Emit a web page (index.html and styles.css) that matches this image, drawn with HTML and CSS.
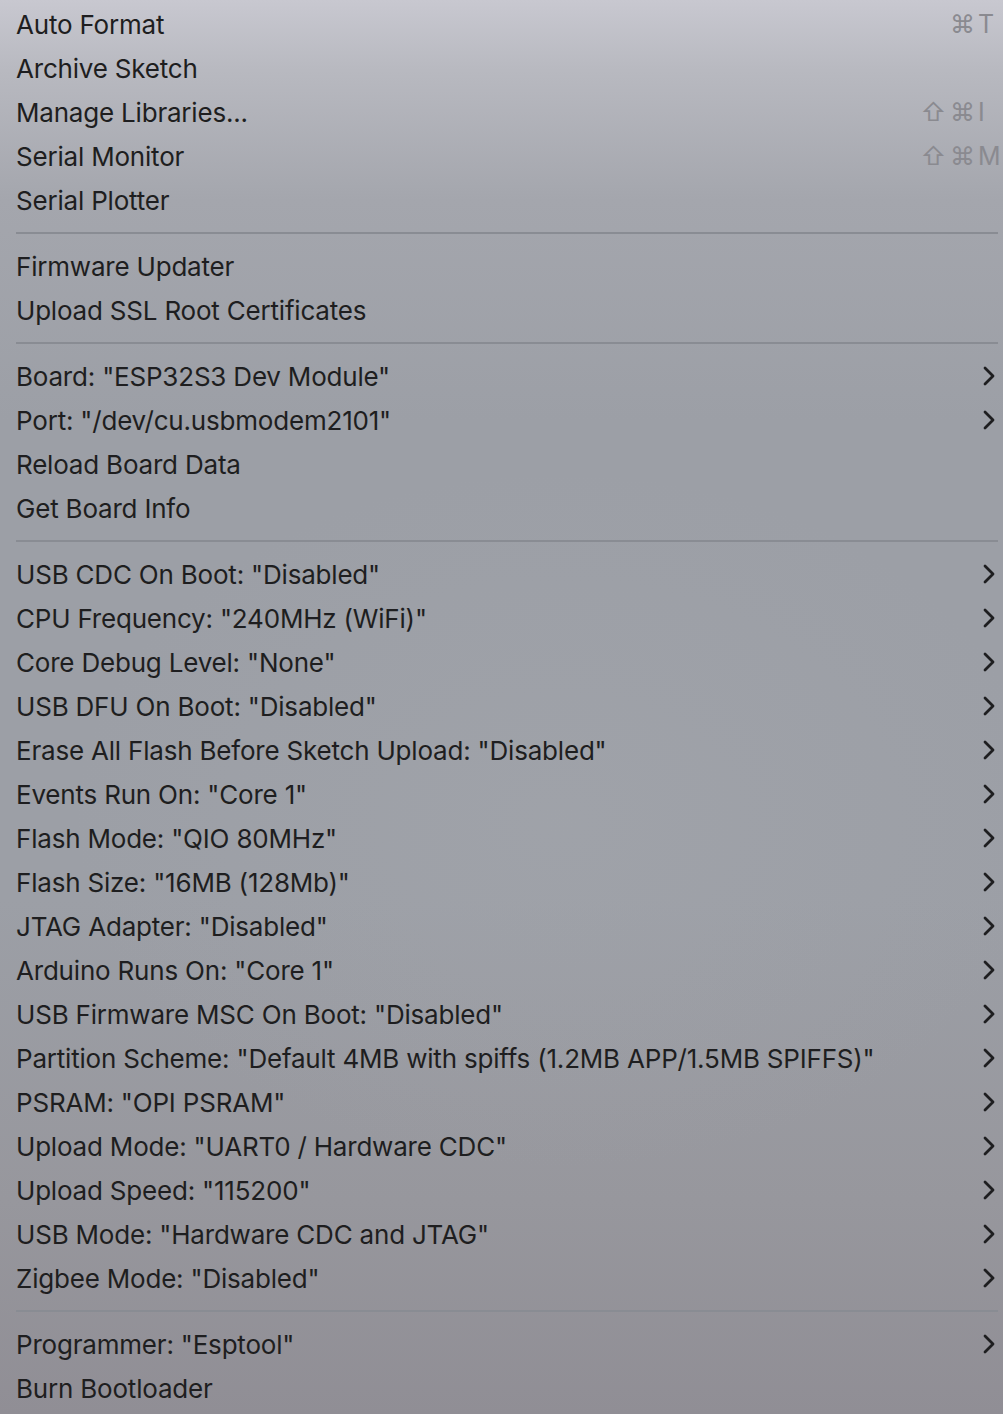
FILE: index.html
```html
<!DOCTYPE html>
<html lang="en">
<head>
<meta charset="utf-8">
<title>Tools menu</title>
<link rel="stylesheet" href="styles.css">
</head>
<body>
<div class="menu">
  <div class="item"><span class="label">Auto Format</span><span class="keys"><span class="mod">⌘</span><span class="key">T</span></span></div>
  <div class="item"><span class="label">Archive Sketch</span></div>
  <div class="item"><span class="label">Manage Libraries...</span><span class="keys"><span class="mod">⇧</span><span class="mod">⌘</span><span class="key">I</span></span></div>
  <div class="item"><span class="label">Serial Monitor</span><span class="keys"><span class="mod">⇧</span><span class="mod">⌘</span><span class="key">M</span></span></div>
  <div class="item"><span class="label">Serial Plotter</span></div>
  <div class="sep"></div>
  <div class="item"><span class="label">Firmware Updater</span></div>
  <div class="item"><span class="label">Upload SSL Root Certificates</span></div>
  <div class="sep"></div>
  <div class="item sub"><span class="label">Board: "ESP32S3 Dev Module"</span><svg class="chev" viewBox="0 0 12 20"><path d="M2 2 L10 10 L2 18"/></svg></div>
  <div class="item sub"><span class="label">Port: "/dev/cu.usbmodem2101"</span><svg class="chev" viewBox="0 0 12 20"><path d="M2 2 L10 10 L2 18"/></svg></div>
  <div class="item"><span class="label">Reload Board Data</span></div>
  <div class="item"><span class="label">Get Board Info</span></div>
  <div class="sep"></div>
  <div class="item sub"><span class="label">USB CDC On Boot: "Disabled"</span><svg class="chev" viewBox="0 0 12 20"><path d="M2 2 L10 10 L2 18"/></svg></div>
  <div class="item sub"><span class="label">CPU Frequency: "240MHz (WiFi)"</span><svg class="chev" viewBox="0 0 12 20"><path d="M2 2 L10 10 L2 18"/></svg></div>
  <div class="item sub"><span class="label">Core Debug Level: "None"</span><svg class="chev" viewBox="0 0 12 20"><path d="M2 2 L10 10 L2 18"/></svg></div>
  <div class="item sub"><span class="label">USB DFU On Boot: "Disabled"</span><svg class="chev" viewBox="0 0 12 20"><path d="M2 2 L10 10 L2 18"/></svg></div>
  <div class="item sub"><span class="label">Erase All Flash Before Sketch Upload: "Disabled"</span><svg class="chev" viewBox="0 0 12 20"><path d="M2 2 L10 10 L2 18"/></svg></div>
  <div class="item sub"><span class="label">Events Run On: "Core 1"</span><svg class="chev" viewBox="0 0 12 20"><path d="M2 2 L10 10 L2 18"/></svg></div>
  <div class="item sub"><span class="label">Flash Mode: "QIO 80MHz"</span><svg class="chev" viewBox="0 0 12 20"><path d="M2 2 L10 10 L2 18"/></svg></div>
  <div class="item sub"><span class="label">Flash Size: "16MB (128Mb)"</span><svg class="chev" viewBox="0 0 12 20"><path d="M2 2 L10 10 L2 18"/></svg></div>
  <div class="item sub"><span class="label">JTAG Adapter: "Disabled"</span><svg class="chev" viewBox="0 0 12 20"><path d="M2 2 L10 10 L2 18"/></svg></div>
  <div class="item sub"><span class="label">Arduino Runs On: "Core 1"</span><svg class="chev" viewBox="0 0 12 20"><path d="M2 2 L10 10 L2 18"/></svg></div>
  <div class="item sub"><span class="label">USB Firmware MSC On Boot: "Disabled"</span><svg class="chev" viewBox="0 0 12 20"><path d="M2 2 L10 10 L2 18"/></svg></div>
  <div class="item sub"><span class="label">Partition Scheme: "Default 4MB with spiffs (1.2MB APP/1.5MB SPIFFS)"</span><svg class="chev" viewBox="0 0 12 20"><path d="M2 2 L10 10 L2 18"/></svg></div>
  <div class="item sub"><span class="label">PSRAM: "OPI PSRAM"</span><svg class="chev" viewBox="0 0 12 20"><path d="M2 2 L10 10 L2 18"/></svg></div>
  <div class="item sub"><span class="label">Upload Mode: "UART0 / Hardware CDC"</span><svg class="chev" viewBox="0 0 12 20"><path d="M2 2 L10 10 L2 18"/></svg></div>
  <div class="item sub"><span class="label">Upload Speed: "115200"</span><svg class="chev" viewBox="0 0 12 20"><path d="M2 2 L10 10 L2 18"/></svg></div>
  <div class="item sub"><span class="label">USB Mode: "Hardware CDC and JTAG"</span><svg class="chev" viewBox="0 0 12 20"><path d="M2 2 L10 10 L2 18"/></svg></div>
  <div class="item sub"><span class="label">Zigbee Mode: "Disabled"</span><svg class="chev" viewBox="0 0 12 20"><path d="M2 2 L10 10 L2 18"/></svg></div>
  <div class="sep"></div>
  <div class="item sub"><span class="label">Programmer: "Esptool"</span><svg class="chev" viewBox="0 0 12 20"><path d="M2 2 L10 10 L2 18"/></svg></div>
  <div class="item"><span class="label">Burn Bootloader</span></div>
</div>
</body>
</html>
```
FILE: styles.css
```css
html, body {
  margin: 0;
  padding: 0;
}
body {
  width: 1003px;
  height: 1414px;
  overflow: hidden;
  background:
    radial-gradient(ellipse 700px 500px at 560px 820px, rgba(165,168,174,0.35), rgba(165,168,174,0) 70%),
    linear-gradient(180deg, #c8c8d0 0px, #b8b9c0 70px, #a4a6ad 200px, #9c9fa6 420px, #9c9fa6 900px, #97979d 1200px, #908e95 1414px);
  font-family: Inter, "Noto Sans", "Liberation Sans", sans-serif;
  color: #1e1e20;
}
.menu {
  display: flex;
  flex-direction: column;
  padding: 2px 5px 0 16px;
}
.item {
  height: 44px;
  display: flex;
  align-items: center;
  font-size: 26px;
  letter-spacing: -0.2px;
}
.label {
  flex: 1;
  white-space: nowrap;
}
.keys {
  display: flex;
  align-items: center;
  color: #8a8a90;
  font-size: 25px;
  letter-spacing: 0;
  margin-right: -5px;
}
.mod {
  width: 29px;
  text-align: center;
}
.key {
  width: 25px;
  padding-left: 1px;
}
.chev {
  width: 12px;
  height: 20px;
  margin-right: 3px;
  fill: none;
  stroke: #1e1e20;
  stroke-width: 2.8;
  stroke-linecap: round;
  stroke-linejoin: round;
}
.sep {
  height: 22px;
  display: flex;
  align-items: center;
}
.sep::before {
  content: "";
  display: block;
  width: 100%;
  height: 2px;
  background: #898c93;
}
```
